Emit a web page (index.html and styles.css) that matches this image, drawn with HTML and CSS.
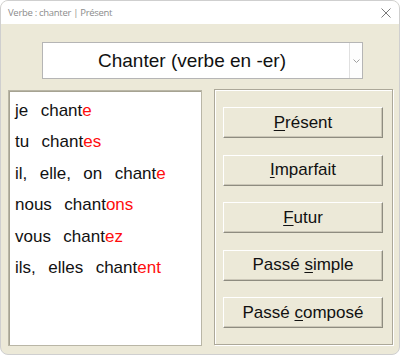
FILE: index.html
```html
<!DOCTYPE html>
<html lang="fr">
<head>
<meta charset="utf-8">
<title>Verbe : chanter | Présent</title>
<link rel="stylesheet" href="styles.css">
</head>
<body>
<div class="window">
  <div class="titlebar">
    <span class="title">Verbe : chanter | Présent</span>
    <svg class="close" width="10" height="10" viewBox="0 0 10 10"><path d="M0.5 0.5 L9.5 9.5 M9.5 0.5 L0.5 9.5" stroke="#7a7a7a" stroke-width="1" fill="none"/></svg>
  </div>
  <div class="content">
    <div class="combo">
      <div class="combo-text">Chanter (verbe en -er)</div>
      <div class="combo-btn">
        <svg width="7" height="4" viewBox="0 0 7 4"><path d="M0.5 0.5 L3.5 3.5 L6.5 0.5" stroke="#a0a0a0" stroke-width="1" fill="none"/></svg>
      </div>
    </div>
    <div class="row">
      <div class="list">
        <div class="line">je  chant<span class="end">e</span></div>
        <div class="line">tu  chant<span class="end">es</span></div>
        <div class="line">il,  elle,  on  chant<span class="end">e</span></div>
        <div class="line">nous  chant<span class="end">ons</span></div>
        <div class="line">vous  chant<span class="end">ez</span></div>
        <div class="line">ils,  elles  chant<span class="end">ent</span></div>
      </div>
      <div class="group">
        <div class="btn"><span><u>P</u>résent</span></div>
        <div class="btn"><span><u>I</u>mparfait</span></div>
        <div class="btn"><span><u>F</u>utur</span></div>
        <div class="btn"><span>Passé <u>s</u>imple</span></div>
        <div class="btn"><span>Passé <u>c</u>omposé</span></div>
      </div>
    </div>
  </div>
</div>
</body>
</html>
```
FILE: styles.css
```css
html, body {
  margin: 0;
  padding: 0;
  background: #ffffff;
}
.window {
  width: 400px;
  height: 355px;
  box-sizing: border-box;
  border: 1px solid #cfcfcf;
  border-radius: 8px;
  overflow: hidden;
  background: #ece9d8;
  display: flex;
  flex-direction: column;
}
.titlebar {
  height: 23px;
  flex: none;
  background: #ffffff;
  display: flex;
  align-items: center;
  justify-content: space-between;
  padding: 0 8px 0 7px;
}
.title {
  font-family: "Open Sans", sans-serif;
  font-size: 9.5px;
  color: #8c8c8c;
  letter-spacing: -0.3px;
}
.close {
  display: block;
}
.content {
  display: flex;
  flex-direction: column;
  padding-top: 18px;
}
.combo {
  margin-left: 41px;
  width: 321px;
  height: 37px;
  box-sizing: border-box;
  border: 1px solid #b5b5b5;
  background: #ffffff;
  display: flex;
}
.combo-text {
  flex: 1;
  padding-right: 8px;
  font-family: "Liberation Sans", Arial, sans-serif;
  font-size: 19px;
  color: #111;
  display: flex;
  align-items: center;
  justify-content: center;
}
.combo-btn {
  width: 12px;
  border-left: 1px solid #e0e0e0;
  display: flex;
  align-items: center;
  justify-content: center;
  background: #fdfdfd;
}
.row {
  display: flex;
  gap: 12px;
  padding-left: 7px;
  margin-top: 10px;
}
.list {
  width: 194px;
  height: 256px;
  margin-top: 1px;
  box-sizing: border-box;
  border: 1px solid #b9b6a6;
  box-shadow: inset 1px 1px 0 #a6a392;
  background: #ffffff;
  padding: 4px 0 0 6px;
  font-family: "Liberation Sans", Arial, sans-serif;
  font-size: 17px;
  color: #111;
  word-spacing: 1.5px;
}
.line {
  white-space: pre;
  line-height: 31.4px;
}
.end {
  color: #ff0d0d;
}
.group {
  width: 179px;
  height: 256px;
  box-sizing: border-box;
  border: 1px solid #aca899;
  box-shadow: inset 1px 1px 0 #ffffff, 1px 1px 0 #ffffff;
  display: flex;
  flex-direction: column;
  gap: 16.5px;
  padding: 17px 0 0 8px;
}
.btn {
  width: 160px;
  height: 31px;
  box-sizing: border-box;
  border: 1px solid;
  border-color: #ffffff #8e8c80 #8e8c80 #ffffff;
  box-shadow: inset -1px -1px 0 #cbc7b8;
  background: #ece9d8;
  font-family: "Liberation Sans", Arial, sans-serif;
  font-size: 17px;
  color: #111;
  display: flex;
  align-items: center;
  justify-content: center;
}
.btn u {
  text-decoration-thickness: 1px;
  text-underline-offset: 2px;
}
```
